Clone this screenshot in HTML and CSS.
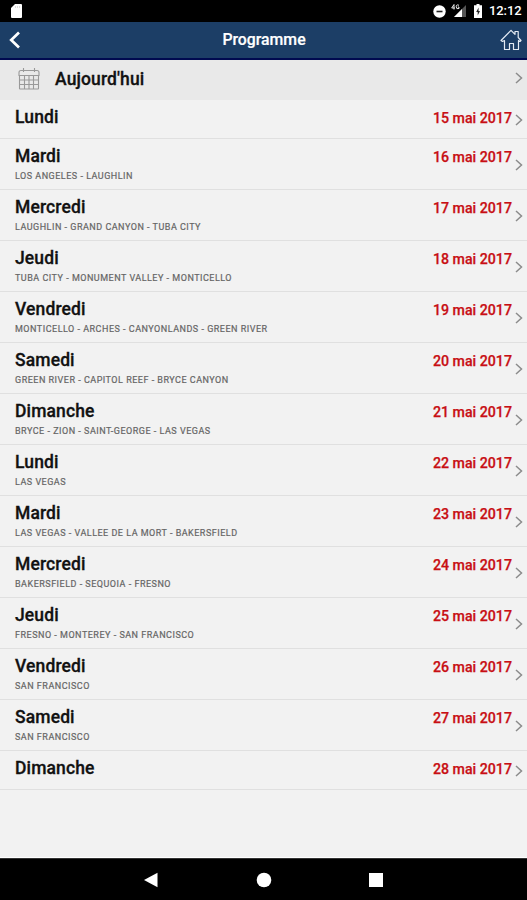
FILE: index.html
```html
<!DOCTYPE html>
<html lang="fr">
<head>
<meta charset="utf-8">
<title>Programme</title>
<link rel="stylesheet" href="styles.css">
</head>
<body>
<div class="status">
  <svg class="sd" width="11" height="14" viewBox="0 0 11 14"><path d="M4 0h6q1 0 1 1v12q0 1-1 1H1q-1 0-1-1V4z" fill="#fff"/><path d="M4.500 2v2M6.500 2v2M8.500 2v2" stroke="#ddd"/></svg>
  <div class="status-right">
    <svg width="13" height="13" viewBox="0 0 13 13"><circle cx="6.500" cy="6.500" r="6.200" fill="#fff"/><path d="M3.500 6.500h6" stroke="#222" stroke-width="1.600"/></svg>
    <svg class="signal" width="16" height="14" viewBox="0 0 16 14"><path d="M15 1v12H3z" fill="#555"/><path d="M11 5v8H3z" fill="#fff"/><path d="M3 .5L.7 4h3.200M3 .5v5M8 1.300Q5.200 0 5.200 2.800T8 4.500V3H6.800" fill="none" stroke="#fff" stroke-width=".9"/></svg>
    <svg class="battery" width="8" height="14" viewBox="0 0 8 14"><path d="M2.500 0h3v1.300H8V14H0V1.300h2.500z" fill="#fff"/><path d="M4.600 3.500L2.200 8h1.500v3.500L6 7H4.500z" fill="#222"/></svg>
    <span class="clock">12:12</span>
  </div>
</div>
<header class="bar">
  <svg class="back" width="12" height="18" viewBox="0 0 12 18"><path d="M10 1.500L2.200 9l7.800 7.500" fill="none" stroke="#fff" stroke-width="2.700"/></svg>
  <h1>Programme</h1>
  <svg class="home" width="22" height="22" viewBox="0 0 22 22"><path d="M1 11.500L11 1.300l4 4V2.500h3.200v6l2.800 3-1 1-1.500-1V20.500h-5v-6h-4v6h-5V11.500l-2 1z" fill="none" stroke="#e4ebf4" stroke-width="1.200" stroke-linejoin="round"/></svg>
</header>
<main class="list" id="list">
  <div class="today">
    <svg class="calendar" width="22" height="23" viewBox="0 0 22 23"><path d="M3 3.500h16q2 0 2 2v3H1v-3q0-2 2-2zM1.500 8.500v13q0 .5.500.5h18q.5 0 .5-.5v-13M1.500 13h19M1.500 17.500h19M6.500 8.500V22M11 8.500V22M15.500 8.500V22M5.500 1v4M16.500 1v4" fill="none" stroke="#999" stroke-width="1.100"/></svg>
    <span class="day">Aujourd'hui</span>
    <svg class="chevron" width="8" height="12" viewBox="0 0 8 12"><path d="M1 1l5.500 5L1 11"/></svg>
  </div>
</main>
<nav class="nav">
  <svg width="14" height="16" viewBox="0 0 14 16"><path d="M0 8L13.500.8v14.400z" fill="#fff"/></svg>
  <svg width="16" height="16" viewBox="0 0 16 16"><circle cx="8" cy="8" r="7.300" fill="#fff"/></svg>
  <svg width="14" height="14" viewBox="0 0 14 14"><path d="M0 0h14v14H0z" fill="#fff"/></svg>
</nav>
<script src="script.js"></script>
</body>
</html>
```
FILE: styles.css
```css
* { box-sizing: border-box; }
body { margin: 0; height: 900px; display: flex; flex-direction: column; overflow: hidden; font-family: Roboto, "Liberation Sans", sans-serif; background: #f2f2f2; color: #111; }
svg { display: block; flex: none; }
.status { height: 22px; flex: none; background: #000; color: #fff; display: flex; align-items: center; justify-content: space-between; padding: 0 6px 0 11px; }
.status-right { display: flex; align-items: center; }
.signal { margin-left: 5px; }
.battery { margin-left: 7px; }
.clock { width: 32px; margin-left: 7px; font-size: 13px; line-height: 20px; font-weight: 500; letter-spacing: -.1px; }
.bar { height: 38px; flex: none; background: #1c3e66; border-bottom: 2px solid #000a50; color: #fff; display: grid; grid-template-columns: 40px 1fr 40px; align-items: center; }
.bar h1 { margin: 0 0 0 1px; text-align: center; font-size: 15.800px; line-height: 20px; font-weight: 500; -webkit-text-stroke: .2px #fff; }
.back { margin-left: 9px; }
.home { margin-left: 13px; margin-bottom: 1px; }
.list { flex: 1; border-bottom: 1px solid #fff; }
.today { height: 40px; background: #e9e9e9; display: flex; align-items: center; padding: 0 4px 4px 18px; }
.today .day { flex: 1; margin-left: 15px; padding-top: 1px; }
.day { font-size: 17.500px; line-height: 20px; font-weight: 500; letter-spacing: .12px; color: #111; -webkit-text-stroke: .3px #111; }
.row { height: 51px; display: flex; justify-content: space-between; border-bottom: 1px solid #e0e0e0; padding: 7px 4px 0 15px; }
.row.short { height: 39px; }
.info { display: flex; flex-direction: column; }
.places { font-size: 9px; line-height: 12px; margin-top: 4px; letter-spacing: .5px; color: #666; -webkit-text-stroke: .2px #666; white-space: nowrap; }
.when { display: flex; align-items: flex-start; gap: 3px; }
.date { font-size: 14.200px; line-height: 20px; margin-top: 1px; font-weight: 500; color: #c80f14; white-space: nowrap; -webkit-text-stroke: .25px #c80f14; }
.chevron { fill: none; stroke: #8c8c8c; stroke-width: 1.500; }
.row .chevron { margin-top: 13px; }
.row.short .chevron { margin-top: 7px; }
.nav { height: 42px; flex: none; background: #000; border-top: 1px solid #333; display: flex; align-items: center; gap: 98px; padding-left: 144px; }
.nav svg:last-child { margin-left: -1px; }
```
FILE: script.js
```js
const days = [
  ["Lundi", ""],
  ["Mardi", "LOS ANGELES - LAUGHLIN"],
  ["Mercredi", "LAUGHLIN - GRAND CANYON - TUBA CITY"],
  ["Jeudi", "TUBA CITY - MONUMENT VALLEY - MONTICELLO"],
  ["Vendredi", "MONTICELLO - ARCHES - CANYONLANDS - GREEN RIVER"],
  ["Samedi", "GREEN RIVER - CAPITOL REEF - BRYCE CANYON"],
  ["Dimanche", "BRYCE - ZION - SAINT-GEORGE - LAS VEGAS"],
  ["Lundi", "LAS VEGAS"],
  ["Mardi", "LAS VEGAS - VALLEE DE LA MORT - BAKERSFIELD"],
  ["Mercredi", "BAKERSFIELD - SEQUOIA - FRESNO"],
  ["Jeudi", "FRESNO - MONTEREY - SAN FRANCISCO"],
  ["Vendredi", "SAN FRANCISCO"],
  ["Samedi", "SAN FRANCISCO"],
  ["Dimanche", ""]
];
document.getElementById("list").insertAdjacentHTML("beforeend", days.map(([day, places], i) => `
  <div class="row${places ? "" : " short"}">
    <div class="info"><span class="day">${day}</span>${places ? `<span class="places">${places}</span>` : ""}</div>
    <div class="when"><span class="date">${15 + i} mai 2017</span>
      <svg class="chevron" width="8" height="12" viewBox="0 0 8 12"><path d="M1 1l5.500 5L1 11"/></svg></div>
  </div>`).join(""));
```
